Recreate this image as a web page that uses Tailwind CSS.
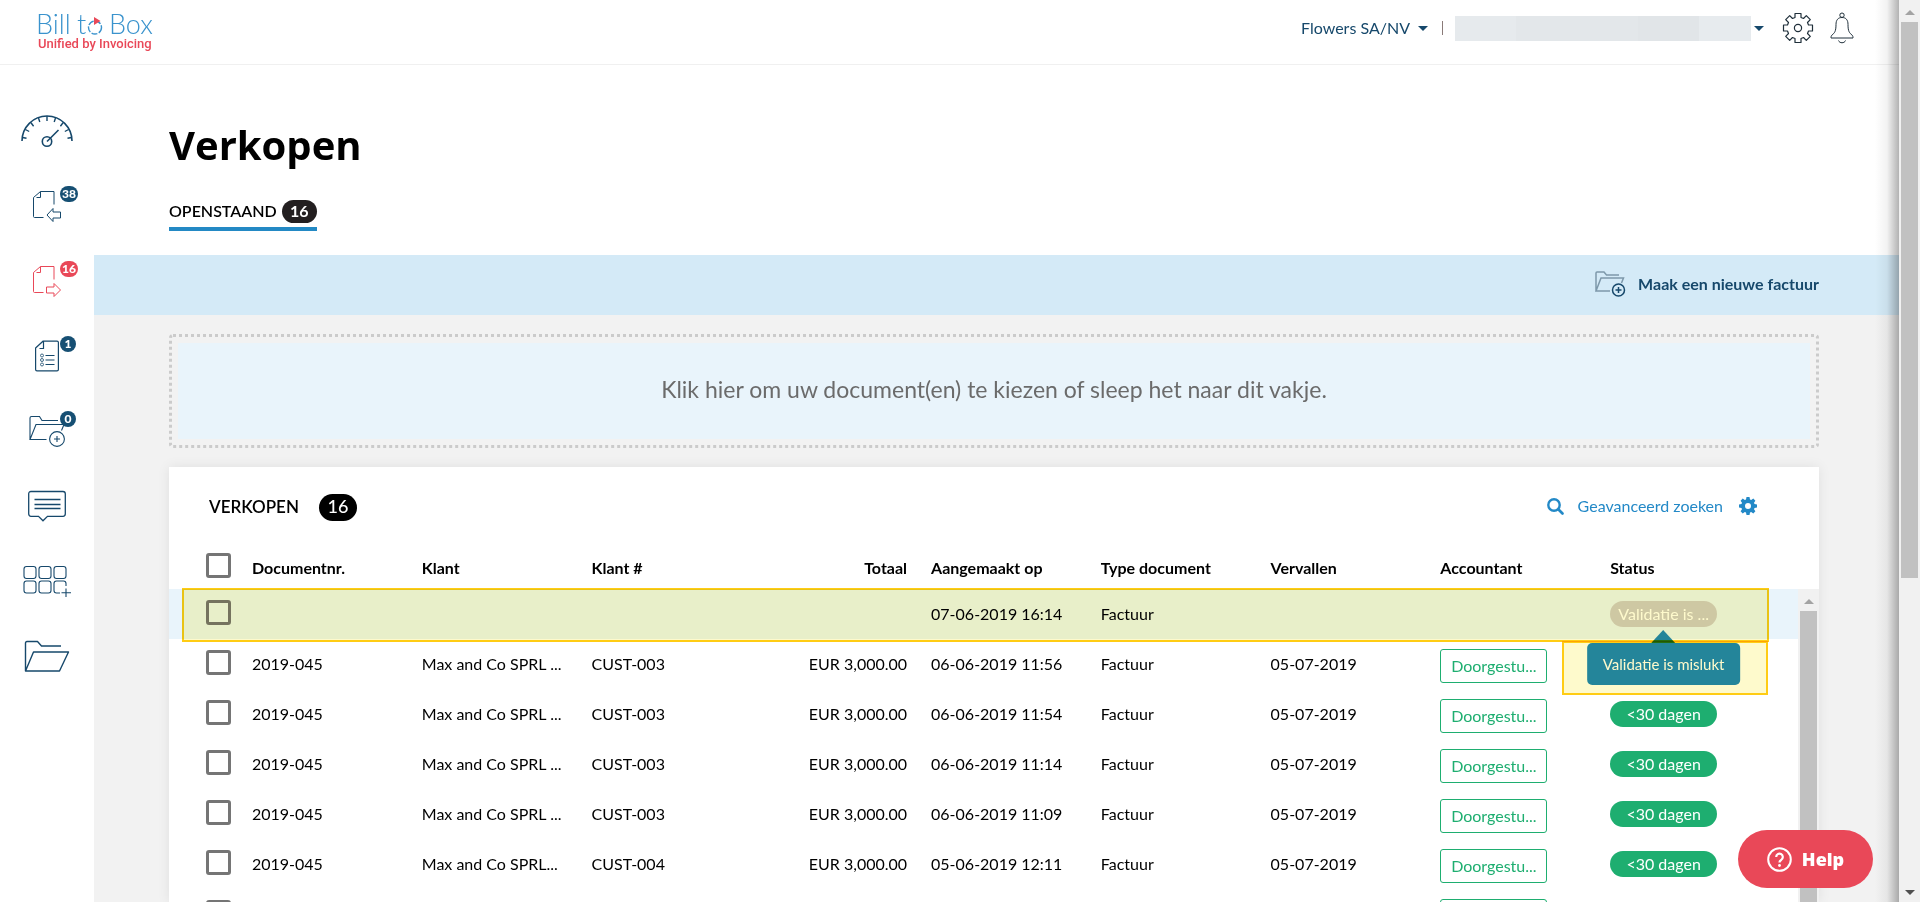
<!DOCTYPE html>
<html lang="nl">

<head>
  <meta charset="UTF-8">
  <title>Bill to Box - Verkopen</title>
  <meta name="viewport" content="width=device-width, initial-scale=1.0">
  <script src="https://cdn.jsdelivr.net/npm/@tailwindcss/browser@4"></script>
</head>

<body class="h-screen overflow-hidden flex bg-white text-black text-base font-['Lato',sans-serif]">
  <div class="relative flex-1 min-w-0 flex flex-col">

    <!-- Top bar -->
    <header class="h-[65px] shrink-0 border-b border-[#f0f0f0] flex items-start justify-between pl-9 pr-[45px]">
      <a href="#" class="mt-3" aria-label="Bill to Box">
        <svg class="w-[120px] h-10 overflow-visible" viewBox="0 0 120 40" fill="none">
          <g font-family="Lato" font-weight="300" font-size="27" fill="#3a93cd">
            <text x="0" y="22">Bill</text>
            <text x="41" y="22">t</text>
            <text x="73" y="22">Box</text>
          </g>
          <circle cx="59" cy="15.500" r="6.500" stroke="#3a93cd" stroke-width="1.400" stroke-dasharray="6 1.500" />
          <path d="M58 5v8l6.500-4z" fill="#e94858" />
          <text x="2" y="36" font-family="Roboto" font-weight="500" font-size="13" fill="#e94858">Unified by Invoicing</text>
        </svg>
      </a>
      <div class="flex items-center mt-3 h-8 text-[#16486b]">
        <button class="flex items-center gap-2">Flowers SA/NV
          <svg class="w-[10px] h-[5px]" viewBox="0 0 10 5"><path d="M0 0h10L5 5z" fill="#16486b" /></svg>
        </button>
        <span class="w-px h-[14px] ml-[14px] mr-3 bg-[#8a7a78]"></span>
        <button class="flex items-center gap-[3px]" aria-label="Account">
          <span class="flex h-[25px] w-[296px] bg-[#e7ebee]">
            <span class="w-[61px] bg-[#e6eaed]"></span>
            <span class="w-[122px] bg-[#e3e7ea]"></span>
            <span class="w-[61px] bg-[#e1e5e8]"></span>
          </span>
          <svg class="w-[10px] h-[5px]" viewBox="0 0 10 5"><path d="M0 0h10L5 5z" fill="#16486b" /></svg>
        </button>
        <button class="ml-[18px]" aria-label="Instellingen">
          <svg class="w-8 h-8" viewBox="0 0 32 32" fill="none" stroke="#1f2f3a" stroke-width="1.200" stroke-linejoin="round">
            <path d="M13 1.500h6v4l2.500 1 2.800-2.800 4 4-2.800 2.800 1 2.500h4v6h-4l-1 2.500 2.800 2.800-4 4-2.800-2.800-2.500 1v4h-6v-4l-2.500-1-2.800 2.800-4-4 2.800-2.800-1-2.500h-4v-6h4l1-2.500-2.800-2.800 4-4 2.800 2.800 2.500-1z" />
            <circle cx="16" cy="16" r="3.600" />
          </svg>
        </button>
        <button class="ml-4" aria-label="Meldingen">
          <svg class="w-6 h-8" viewBox="0 0 24 32" fill="none" stroke="#1f2f3a" stroke-width="1" stroke-linejoin="round">
            <circle cx="12" cy="3.200" r="2.200" />
            <path d="M12 5.500c-4 0-6 2.500-6 7 0 7-1.500 8.500-4 10.500-1 1-1 2-1 3h22c0-1 0-2-1-3-2.500-2-4-3.500-4-10.500 0-4.500-2-7-6-7z" />
            <path d="M8.500 28.500c1 3 6 3 7 0" />
          </svg>
        </button>
      </div>
    </header>

    <div class="flex-1 min-h-0 flex">
      <!-- Sidebar -->
      <nav class="w-[94px] shrink-0 pt-7 flex flex-col">
        <a href="#" aria-label="Dashboard" class="relative h-[75px] shrink-0 flex items-center justify-center">
          <svg class="w-[52px] h-8" viewBox="0 0 52 32" fill="none" stroke="#16486b" stroke-width="1.600">
            <path d="M1 26a25 25 0 0 1 50 0" />
            <path d="M1.500 22.500l4 .8M4.400 14.500l3.800 2M10 7.800l2.600 3.400M17.500 3l1.300 4M26 1v5M34.500 3l-1.300 4M42 7.800l-2.600 3.400M47.600 14.500l-3.800 2M50.500 22.500l-4 .8" stroke-width="1.400" />
            <circle cx="26" cy="26.500" r="4.700" />
            <path d="M26 26.500L37.500 15" />
          </svg>
        </a>
        <a href="#" class="relative h-[75px] shrink-0 flex items-center justify-center">
          <svg class="w-7 h-8" viewBox="0 0 28 32" fill="none" stroke="#16486b" stroke-width="1">
            <path d="M10.500 27.500H1.500c-.6 0-1-.4-1-1V7.500L7.500 1.500H21v13M7.500 1.500v6h-4" />
            <path d="M14 25l6-6.500v3.500h7.500v6H20v3.500z" />
          </svg>
          <span class="absolute left-[60px] top-[18px] w-[18px] h-4 rounded-full bg-[#164f73] text-white text-[12px] leading-4 font-black text-center">38</span>
        </a>
        <a href="#" class="relative h-[75px] shrink-0 flex items-center justify-center">
          <svg class="w-7 h-8" viewBox="0 0 28 32" fill="none" stroke="#e94858" stroke-width="1">
            <path d="M10.500 27.500H1.500c-.6 0-1-.4-1-1V7.500L7.500 1.500H21v13M7.500 1.500v6h-4" />
            <path d="M27.500 25l-6.500-6.500v3.500h-7.500v6H21v3.500z" />
          </svg>
          <span class="absolute left-[60px] top-[18px] w-[18px] h-4 rounded-full bg-[#e94858] text-white text-[12px] leading-4 font-black text-center">16</span>
        </a>
        <a href="#" class="relative h-[75px] shrink-0 flex items-center justify-center">
          <svg class="w-6 h-8" viewBox="0 0 24 32" fill="none" stroke="#16486b" stroke-width="1.200">
            <path d="M.6 8L8 1.200h14c.9 0 1.400.5 1.400 1.400v26.800c0 .9-.5 1.400-1.400 1.400H2c-.9 0-1.400-.5-1.400-1.400zM8.500 1.500v7H4.500" />
            <path d="M10.500 15.500h9M10.500 20h9M10.500 24.500h9" stroke-width="1.100" />
            <g stroke-width=".8"><circle cx="7" cy="15.500" r="1.500" /><circle cx="7" cy="20" r="1.500" /><circle cx="7" cy="24.500" r="1.500" /></g>
          </svg>
          <span class="absolute left-[60px] top-[18px] w-4 h-4 rounded-full bg-[#164f73] text-white text-[12px] leading-4 font-black text-center">1</span>
        </a>
        <a href="#" class="relative h-[75px] shrink-0 flex items-center justify-center">
          <svg class="w-9 h-8" viewBox="0 0 36 32" fill="none" stroke="#16486b" stroke-width="1.100">
            <path d="M17.500 24.500H1L7 9.500h28l-2.500 6M1 24.500V3c0-1 .5-1.500 1.500-1.500h8L13 5.500h16" />
            <circle cx="28" cy="24" r="7.400" />
            <path d="M25 24h6M28 21v6" />
          </svg>
          <span class="absolute left-[60px] top-[18px] w-4 h-4 rounded-full bg-[#164f73] text-white text-[12px] leading-4 font-black text-center">0</span>
        </a>
        <a href="#" aria-label="Berichten" class="relative h-[75px] shrink-0 flex items-center justify-center">
          <svg class="w-[38px] h-8" viewBox="0 0 38 32" fill="none" stroke="#16486b" stroke-width="1.300">
            <path d="M3 1.500h32c1.500 0 2.300 1 2.300 2.300v20c0 1.500-1 2.500-2.300 2.500H19.500L15 30.800l-4.500-4.500H3c-1.500 0-2.300-1-2.300-2.500v-20C.7 2.500 1.500 1.500 3 1.500z" />
            <path d="M6.500 9.500h26M6.500 14.500h26M6.500 18.500h26" />
          </svg>
        </a>
        <a href="#" aria-label="Apps" class="relative h-[75px] shrink-0 flex items-center justify-center">
          <svg class="w-12 h-8" viewBox="0 0 48 32" fill="none" stroke="#16486b" stroke-width="1.100">
            <rect x="1" y="1.500" width="12" height="12" rx="2.500" /><rect x="16" y="1.500" width="12" height="12" rx="2.500" /><rect x="31" y="1.500" width="12" height="12" rx="2.500" />
            <rect x="1" y="16" width="12" height="12" rx="2.500" /><rect x="16" y="16" width="12" height="12" rx="2.500" />
            <path d="M37 28h-3.500c-1.500 0-2.500-1-2.500-2.500v-7c0-1.500 1-2.500 2.500-2.500h7c1.500 0 2.500 1 2.500 2.500V21M43 23.500v8.500M38.500 27.800H48" />
          </svg>
        </a>
        <a href="#" aria-label="Archief" class="relative h-[75px] shrink-0 flex items-center justify-center">
          <svg class="w-[46px] h-8" viewBox="0 0 46 32" fill="none" stroke="#16486b" stroke-width="1.400" stroke-linejoin="round">
            <path d="M1.500 31L9.500 12h35l-9 19zM1.500 31V3c0-1 .5-1.500 1.500-1.500h10.500L17.500 6H37" />
          </svg>
        </a>
      </nav>

      <main class="flex-1 min-w-0 flex flex-col">
        <div class="shrink-0 pl-[75px] pt-[50px] pb-6">
          <h1 class="text-[40px] leading-[60px] font-bold font-['Open_Sans',sans-serif]">Verkopen</h1>
          <a href="#" class="mt-[25px] inline-flex items-start gap-[5px] border-b-4 border-[#2389c4] pb-1 leading-[21px] font-semibold align-top">
            OPENSTAAND
            <span class="w-[35px] h-[23px] rounded-full bg-[#231f20] text-white text-center font-bold">16</span>
          </a>
        </div>

        <div class="h-[60px] shrink-0 bg-[#d4eaf7] flex items-center justify-end pr-20 pb-[2px]">
          <button class="flex items-center gap-3 font-bold text-[#16486b]">
            <svg class="w-[31px] h-[26px]" viewBox="0 0 31 26" fill="none">
              <path d="M15 20H1L6 7h22.500l-2 5M1 20V2c0-.6.400-1 1-1h7l2.500 3H24" stroke="#7d98aa" stroke-width="1.500" />
              <circle cx="23.500" cy="19" r="6" stroke="#16486b" stroke-width="1.500" />
              <path d="M20.500 19h6M23.500 16v6" stroke="#16486b" stroke-width="1.500" />
            </svg>
            Maak een nieuwe factuur
          </button>
        </div>

        <div class="flex-1 min-h-0 flex flex-col gap-[19px] bg-[#f2f2f2] pt-[19px] pl-[75px] pr-20">
          <button class="shrink-0 h-[114px] p-[6px] border-3 border-dotted border-[#cbcbcb] rounded">
            <span class="h-full flex items-center justify-center pb-1 bg-[#e9f4fb] text-[#6b6b6b] text-[23px]">Klik hier om uw document(en) te kiezen of sleep het naar dit vakje.</span>
          </button>

          <!-- Sales table -->
          <section class="flex-1 min-h-0 bg-white shadow-[0_0_12px_rgba(0,0,0,0.08)] flex flex-col">
            <div class="flex items-start pt-[27px] pb-5 pl-10 pr-[62px] shrink-0">
              <h2 class="text-[17px] leading-[25px] font-semibold">VERKOPEN</h2>
              <span class="ml-5 w-[38px] h-[27px] rounded-full bg-black text-white text-lg leading-[25px] font-medium text-center">16</span>
              <div class="ml-auto flex items-center gap-4">
                <a href="#" class="flex items-center gap-[14px] text-[#2389c7]">
                  <svg class="w-[17px] h-[17px]" viewBox="0 0 17 17" fill="none" stroke="#2389c7" stroke-linecap="round">
                    <circle cx="7" cy="7" r="5.700" stroke-width="2.400" />
                    <path d="M11.500 11.500l4 4" stroke-width="2.600" />
                  </svg>
                  Geavanceerd zoeken
                </a>
                <button aria-label="Kolommen">
                  <svg class="w-[18px] h-[18px]" viewBox="0 0 18 18" fill="#2389c7">
                    <path fill-rule="evenodd" d="M7.500 0h3l.5 2.500 1.200.500L14.300 1.600l2.100 2.100L15 5.800l.5 1.200 2.500.5v3l-2.500.5-.5 1.200 1.400 2.100-2.100 2.100L12.200 15l-1.200.5-.5 2.500h-3L7 15.500 5.800 15l-2.100 1.400-2.100-2.100L3 12.200 2.500 11 0 10.500v-3L2.500 7 3 5.800 1.600 3.700l2.100-2.100L5.800 3 7 2.500zM9 6a3 3 0 1 0 0 6 3 3 0 0 0 0-6z" />
                  </svg>
                </button>
              </div>
            </div>

            <div class="flex-1 min-h-0 flex">
              <div class="relative flex-1 min-w-0 overflow-hidden">
                <table class="w-full table-fixed text-left whitespace-nowrap">
                  <colgroup>
                    <col class="w-[71px]">
                    <col><col><col><col><col><col><col><col><col>
                    <col class="w-[30px]">
                  </colgroup>
                  <thead>
                    <tr class="h-12">
                      <th class="pl-[37px]"><input type="checkbox" aria-label="Alles selecteren" class="block w-[25px] h-[25px] appearance-none border-3 border-[#757575] rounded-[3px]"></th>
                      <th class="px-3 pt-[6px]">Documentnr.</th>
                      <th class="px-3 pt-[6px]">Klant</th>
                      <th class="px-3 pt-[6px]">Klant #</th>
                      <th class="px-3 pt-[6px] text-right">Totaal</th>
                      <th class="px-3 pt-[6px]">Aangemaakt op</th>
                      <th class="px-3 pt-[6px]">Type document</th>
                      <th class="px-3 pt-[6px]">Vervallen</th>
                      <th class="px-3 pt-[6px]">Accountant</th>
                      <th class="px-3 pt-[6px]">Status</th>
                      <td></td>
                    </tr>
                  </thead>
                  <tbody id="rows">
                    <tr class="h-[50px] bg-[#e9f4fb]">
                      <td class="pl-[37px] pb-[3px]"><input type="checkbox" aria-label="Selecteren" class="block w-[25px] h-[25px] appearance-none border-3 border-[#757575] rounded-[3px]"></td>
                      <td></td>
                      <td></td>
                      <td></td>
                      <td></td>
                      <td class="px-3">07-06-2019 16:14</td>
                      <td class="px-3">Factuur</td>
                      <td></td>
                      <td></td>
                      <td class="px-3">
                        <div class="relative w-[107px]">
                          <span class="block h-[26px] leading-[26px] rounded-full bg-[#cfcccc] text-white text-center">Validatie is ...</span>
                          <div role="tooltip" class="absolute z-10 top-[29px] left-1/2 -translate-x-1/2 flex flex-col items-center">
                            <svg class="w-6 h-[13px]" viewBox="0 0 24 13"><path d="M0 13L12 0l12 13z" fill="#2488c1" /></svg>
                            <span class="px-4 h-[42px] text-[15px] leading-[42px] rounded-[5px] bg-[#2488c1] text-white">Validatie is mislukt</span>
                          </div>
                        </div>
                      </td>
                      <td></td>
                    </tr>
                  </tbody>
                </table>
                <!-- Markers over the failed row and its tooltip -->
                <div class="absolute z-20 top-[47px] left-[13px] right-[29px] h-[54px] border-2 border-[#ffcc14] bg-[#fefacc] mix-blend-multiply"></div>
                <div class="absolute z-20 top-[100px] right-[30px] w-[206px] h-[54px] border-2 border-[#ffcc14] bg-[#fefacc] mix-blend-multiply"></div>
              </div>
              <div class="w-[21px] mt-12 shrink-0 bg-[#f1f1f1] flex flex-col items-center">
                <svg class="w-[10px] h-[5px] mt-[10px] mb-[7px] shrink-0" viewBox="0 0 10 5"><path d="M0 5h10L5 0z" fill="#a3a3a3" /></svg>
                <div class="w-[17px] flex-1 bg-[#c1c1c1]"></div>
              </div>
            </div>
          </section>
        </div>
      </main>
    </div>

    <div class="absolute inset-y-0 right-0 w-6 bg-linear-to-r from-black/0 via-black/5 to-black/30 pointer-events-none"></div>

    <button class="absolute z-30 right-[26px] bottom-[14px] w-[135px] h-[58px] rounded-full bg-[#e94858] text-white text-lg font-extrabold font-['Open_Sans',sans-serif] flex items-center justify-center gap-[10px]">
      <svg class="w-[25px] h-[25px]" viewBox="0 0 25 25" fill="none" stroke="white" stroke-width="2">
        <circle cx="12.500" cy="12.500" r="11.300" />
        <path d="M9.200 10a3.300 3.300 0 1 1 5.200 2.700c-1.300.8-1.900 1.300-1.900 2.800" stroke-width="2.200" />
        <circle cx="12.500" cy="18.500" r="1.400" fill="white" stroke="none" />
      </svg>
      Help
    </button>
  </div>

  <!-- Page scrollbar -->
  <div class="w-[21px] shrink-0 bg-[#f1f1f1] flex flex-col items-center justify-between">
    <div class="flex flex-col items-center w-full h-full min-h-0">
      <svg class="w-[10px] h-[5px] mt-[10px] mb-[7px] shrink-0" viewBox="0 0 10 5"><path d="M0 5h10L5 0z" fill="#a3a3a3" /></svg>
      <div class="w-[17px] h-[63%] bg-[#c1c1c1]"></div>
    </div>
    <svg class="w-[10px] h-[5px] my-[7px] shrink-0" viewBox="0 0 10 5"><path d="M0 0h10L5 5z" fill="#505050" /></svg>
  </div>

  <script>
    const invoices = [
      { client: "Max and Co SPRL ...", code: "CUST-003", created: "06-06-2019 11:56" },
      { client: "Max and Co SPRL ...", code: "CUST-003", created: "06-06-2019 11:54" },
      { client: "Max and Co SPRL ...", code: "CUST-003", created: "06-06-2019 11:14" },
      { client: "Max and Co SPRL ...", code: "CUST-003", created: "06-06-2019 11:09" },
      { client: "Max and Co SPRL...", code: "CUST-004", created: "05-06-2019 12:11" },
      { client: "", code: "", created: "" },
    ];

    const rows = document.getElementById("rows");

    invoices.forEach((inv, i) => {
      const tr = document.createElement("tr");
      tr.className = "h-[50px]";
      // the first invoice's status sits under the tooltip
      const status = i === 0 || !inv.code ? "" : `<span class="block w-[107px] h-[26px] leading-[26px] rounded-full bg-[#1eae70] text-white text-center">&lt;30 dagen</span>`;
      tr.innerHTML = `
        <td class="pl-[37px] pb-[3px]"><input type="checkbox" aria-label="Selecteren" class="block w-[25px] h-[25px] appearance-none border-3 border-[#757575] rounded-[3px]"></td>
        <td class="px-3">${inv.code ? "2019-045" : ""}</td>
        <td class="px-3">${inv.client}</td>
        <td class="px-3">${inv.code}</td>
        <td class="px-3 text-right">${inv.code ? "EUR 3,000.00" : ""}</td>
        <td class="px-3">${inv.created}</td>
        <td class="px-3">${inv.code ? "Factuur" : ""}</td>
        <td class="px-3">${inv.code ? "05-07-2019" : ""}</td>
        <td class="px-3 pt-1"><button class="block w-[107px] h-[34px] border border-[#1eae70] rounded-[3px] text-[#1eae70]">${inv.code ? "Doorgestu..." : ""}</button></td>
        <td class="px-3">${status}</td>
        <td></td>`;
      rows.appendChild(tr);
    });
  </script>
</body>

</html>
